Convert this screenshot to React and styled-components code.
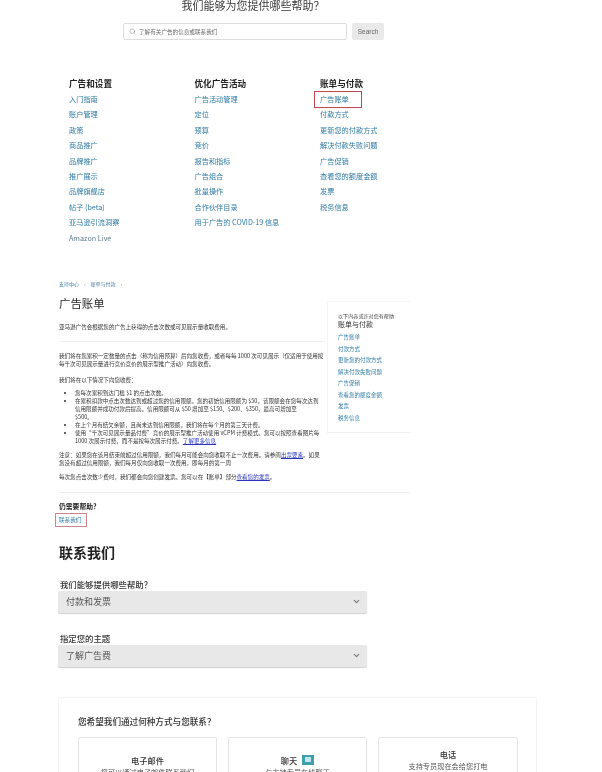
import styled, { createGlobalStyle } from "styled-components";
import { Search, ChevronDown } from "lucide-react";

const GlobalStyle = createGlobalStyle`
  html, body {
    margin: 0;
    padding: 0;
    background: #fff;
  }
  body {
    font-family: "Noto Sans CJK SC", "Liberation Sans", sans-serif;
    color: #333;
  }
`;

const Page = styled.div`
  position: relative;
  width: 602px;
  height: 772px;
  overflow: hidden;
  filter: blur(0.6px);
`;

const HelpHeader = styled.header`
  display: flex;
  flex-direction: column;
  align-items: center;
  width: 500px;
`;

const PageTitle = styled.div`
  font-size: 11px;
  line-height: 10px;
  color: #3a3a3a;
  height: 12px;
  margin-left: 6px;
`;

const SearchRow = styled.div`
  display: flex;
  gap: 5px;
  margin: 11px 0 0 7px;
`;

const SearchBox = styled.div`
  display: flex;
  align-items: center;
  gap: 3px;
  box-sizing: border-box;
  width: 224px;
  height: 17px;
  padding-left: 5px;
  border: 1px solid #ddd;
  border-radius: 2px;
  font-size: 5.6px;
  color: #666;
`;

const SearchButton = styled.div`
  display: flex;
  align-items: center;
  justify-content: center;
  width: 32px;
  height: 17px;
  background: #e9e9e9;
  border-radius: 2px;
  font-family: "Liberation Sans", sans-serif;
  font-size: 6.5px;
  color: #666;
`;

const TopicGrid = styled.nav`
  display: grid;
  grid-template-columns: 125.5px 125.5px 125.5px;
  padding: 37px 0 0 69px;
`;

const TopicTitle = styled.div`
  font-size: 8.6px;
  line-height: 12px;
  font-weight: 700;
  color: #222;
  margin-bottom: 3px;
`;

const TopicLink = styled.div`
  position: relative;
  font-size: 7.2px;
  line-height: 15.4px;
  height: 15.4px;
  color: ${(props) => (props.$muted ? "#5f7a8a" : "#2f7ba5")};
  white-space: nowrap;

  ${(props) =>
    props.$marked &&
    `&::after {
      content: "";
      position: absolute;
      left: -6px;
      top: -1px;
      width: 46px;
      height: 15px;
      border: 1.2px solid #c0474f;
    }`}
`;

const ArticleWrap = styled.section`
  margin: 34px 0 0 59px;
  width: 351px;
`;

const ArticleRow = styled.div`
  display: flex;
  gap: 2px;
`;

const ArticleBody = styled.article`
  width: 266px;
`;

const Breadcrumb = styled.div`
  font-size: 5px;
  line-height: 8px;
  color: #4a86ab;
  display: flex;
  gap: 5px;
`;

const ArticleTitle = styled.h1`
  margin: 7px 0 0;
  font-size: 11.4px;
  line-height: 16px;
  font-weight: 400;
  color: #2a2a2a;
`;

const Para = styled.p`
  margin: ${(props) => props.$top || 0}px 0 0;
  font-size: 5.55px;
  line-height: 8px;
  color: #333;
`;

const Rule = styled.hr`
  border: 0;
  border-top: 1px solid #eee;
  margin: ${(props) => props.$top}px 0 ${(props) => props.$bottom}px;
`;

const BulletList = styled.ul`
  margin: 5px 0 0;
  padding: 0 4px 0 16px;
  font-size: 5.55px;
  line-height: 8.1px;
  color: #333;
`;

const InlineLink = styled.a`
  color: #2a35c4;
  text-decoration: underline;
`;

const Aside = styled.aside`
  box-sizing: border-box;
  width: 83px;
  height: 132px;
  margin-top: 21px;
  padding: 10px 0 0 10px;
  border-left: 1px solid #f4f4f4;
  border-top: 1px solid #f6f6f6;
  border-bottom: 1px solid #eee;
`;

const AsideHint = styled.div`
  font-size: 5.1px;
  line-height: 8px;
  color: #444;
`;

const AsideTitle = styled.div`
  font-size: 7px;
  line-height: 9px;
  color: #333;
  margin-bottom: 3px;
`;

const AsideLink = styled.div`
  font-size: 5.5px;
  line-height: 11.6px;
  color: #2f7ba5;
  white-space: nowrap;
`;

const NeedHelp = styled.div`
  font-size: 6.8px;
  line-height: 9px;
  font-weight: 700;
  color: #222;
`;

const ContactLink = styled.div`
  box-sizing: border-box;
  width: 32px;
  height: 14px;
  margin: 2px 0 0 -4px;
  padding-left: 3px;
  border: 1px solid #c9868c;
  font-size: 5.6px;
  line-height: 12px;
  color: #2f7ba5;
`;

const ContactTitle = styled.h2`
  margin: 15px 0 0;
  font-size: 14px;
  line-height: 20px;
  font-weight: 700;
  color: #222;
`;

const Field = styled.div`
  margin-top: ${(props) => props.$top}px;
  width: 308px;
`;

const FieldLabel = styled.div`
  font-size: 8.4px;
  line-height: 11px;
  color: #333;
  font-weight: 500;
  padding-left: 1px;
`;

const SelectBox = styled.div`
  display: flex;
  align-items: center;
  justify-content: space-between;
  box-sizing: border-box;
  height: 22px;
  margin: 1px 0 0 -1px;
  padding: 0 6px 0 8px;
  background: #e8e8e8;
  border-radius: 2px;
  box-shadow: 0 1px 1px #cfcfcf;
  font-size: 9px;
  color: #555;
`;

const ContactCard = styled.div`
  box-sizing: border-box;
  width: 479px;
  height: 120px;
  margin: 30px 0 0 -1px;
  padding: 17px 19px 0;
  border: 1px solid #f2f2f2;
  border-radius: 3px;
`;

const CardTitle = styled.div`
  font-size: 8.6px;
  line-height: 12px;
  font-weight: 500;
  color: #333;
`;

const TileRow = styled.div`
  display: grid;
  grid-template-columns: 139px 139px 140px;
  gap: 11px;
  margin-top: 10px;
`;

const Tile = styled.div`
  box-sizing: border-box;
  height: 70px;
  padding-top: ${(props) => props.$top}px;
  border: 1px solid #e4e4e4;
  border-radius: 2px;
  text-align: center;
`;

const TileTitle = styled.div`
  display: flex;
  justify-content: center;
  align-items: center;
  gap: 5px;
  font-size: 8.2px;
  line-height: 11px;
  font-weight: 500;
  color: #333;
`;

const TileText = styled.div`
  font-size: 7.2px;
  line-height: 12px;
  color: #555;
  white-space: nowrap;
`;

const topics = [
  {
    title: "广告和设置",
    links: ["入门指南", "账户管理", "政策", "商品推广", "品牌推广", "推广展示", "品牌旗舰店", "帖子 (beta)", "亚马逊引流洞察", "Amazon Live"],
  },
  {
    title: "优化广告活动",
    links: ["广告活动管理", "定位", "预算", "竞价", "报告和指标", "广告组合", "批量操作", "合作伙伴目录", "用于广告的 COVID-19 信息"],
  },
  {
    title: "账单与付款",
    links: ["广告账单", "付款方式", "更新您的付款方式", "解决付款失败问题", "广告促销", "查看您的额度金额", "发票", "税务信息"],
  },
];

const asideLinks = ["广告账单", "付款方式", "更新您的付款方式", "解决付款失败问题", "广告促销", "查看您的额度金额", "发票", "税务信息"];

function ChatBadge() {
  return (
    <svg width="12" height="10" viewBox="0 0 12 10">
      <rect width="12" height="10" fill="#3f9fae" />
      <rect x="3" y="2" width="6" height="5" fill="#c4e6ea" />
    </svg>
  );
}

export default function App() {
  return (
    <Page>
      <GlobalStyle />
      <HelpHeader>
        <PageTitle>我们能够为您提供哪些帮助？</PageTitle>
        <SearchRow>
          <SearchBox>
            <Search size={7} color="#999" />
            了解有关广告的信息或联系我们
          </SearchBox>
          <SearchButton>Search</SearchButton>
        </SearchRow>
      </HelpHeader>

      <TopicGrid>
        {topics.map((topic) => (
          <div key={topic.title}>
            <TopicTitle>{topic.title}</TopicTitle>
            {topic.links.map((link) => (
              <TopicLink key={link} $marked={link === "广告账单"} $muted={link === "Amazon Live"}>
                {link}
              </TopicLink>
            ))}
          </div>
        ))}
      </TopicGrid>

      <ArticleWrap>
        <ArticleRow>
          <ArticleBody>
            <Breadcrumb>
              <span>支持中心</span>
              <span>›</span>
              <span>账单与付款</span>
              <span>›</span>
            </Breadcrumb>
            <ArticleTitle>广告账单</ArticleTitle>
            <Para $top={12}>亚马逊广告会根据您的广告上获得的点击次数或可见展示量收取费用。</Para>
            <Rule $top={10} $bottom={10} />
            <Para>
              我们将在您累积一定数量的点击（称为信用预算）后向您收费，或者每每 1000 次可见展示（仅适用于使用按每千次可见展示量进行竞价竞价的展示型推广活动）向您收费。
            </Para>
            <Para $top={8}>我们将在以下情况下向您收费：</Para>
            <BulletList>
              <li>您每次累积到达门槛 $1 的点击次数。</li>
              <li>
                在累积扣款中点击次数达到或超过您的信用限额。您的初始信用限额为 $50。该限额会在您每次达到信用限额并成功付款后提高。信用限额可从 $50 增加至 $150、$200、$350，最高可增加至
                <br />
                $500。
              </li>
              <li>在上个月有结欠余额，且尚未达到信用限额。我们将在每个月的第三天计费。</li>
              <li>
                使用“千次可见展示量品付费”竞价的展示型推广活动使用 vCPM 计费模式。您可以按照查看图片每 1000 次展示付费，而不是按每次展示付费。
                <InlineLink>了解更多信息</InlineLink>
              </li>
            </BulletList>
            <Para $top={5}>
              注意：如果您在该月结束前超过信用限额，我们每月可能会向您收取不止一次费用。请参阅<InlineLink>出票要素</InlineLink>。如果您没有超过信用限额，我们每月仅向您收取一次费用，即每月的第一周
            </Para>
            <Para $top={6}>
              每次您点击次数少费时，我们都会向您创建发票。您可以在【账单】部分<InlineLink>查看您的发票</InlineLink>。
            </Para>
          </ArticleBody>
          <Aside>
            <AsideHint>以下内容或许对您有帮助</AsideHint>
            <AsideTitle>账单与付款</AsideTitle>
            {asideLinks.map((link) => (
              <AsideLink key={link}>{link}</AsideLink>
            ))}
          </Aside>
        </ArticleRow>
        <Rule $top={11} $bottom={9} />
        <NeedHelp>仍需要帮助？</NeedHelp>
        <ContactLink>联系我们</ContactLink>
        <ContactTitle>联系我们</ContactTitle>
        <Field $top={17}>
          <FieldLabel>我们能够提供哪些帮助？</FieldLabel>
          <SelectBox>
            付款和发票
            <ChevronDown size={9} color="#777" strokeWidth={3} />
          </SelectBox>
        </Field>
        <Field $top={20}>
          <FieldLabel>指定您的主题</FieldLabel>
          <SelectBox>
            了解广告费
            <ChevronDown size={9} color="#777" strokeWidth={3} />
          </SelectBox>
        </Field>
        <ContactCard>
          <CardTitle>您希望我们通过何种方式与您联系？</CardTitle>
          <TileRow>
            <Tile $top={17}>
              <TileTitle>电子邮件</TileTitle>
              <TileText>您可以通过电子邮件联系我们</TileText>
            </Tile>
            <Tile $top={17}>
              <TileTitle>
                聊天 <ChatBadge />
              </TileTitle>
              <TileText>与支持专员在线聊天</TileText>
            </Tile>
            <Tile $top={11}>
              <TileTitle>电话</TileTitle>
              <TileText>支持专员现在会给您打电</TileText>
            </Tile>
          </TileRow>
        </ContactCard>
      </ArticleWrap>
    </Page>
  );
}
